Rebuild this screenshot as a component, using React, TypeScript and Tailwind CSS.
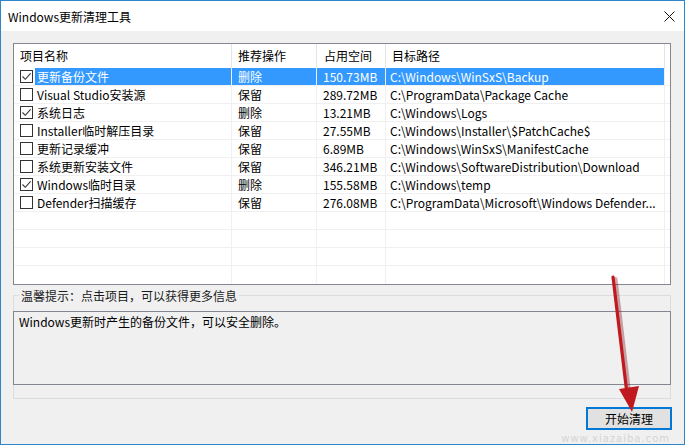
import React from 'react';

type Row = { c: boolean; name: string; op: string; size: string; path: string; sel?: boolean };

const rows: Row[] = [
  { c: true, name: '更新备份文件', op: '删除', size: '150.73MB', path: 'C:\\Windows\\WinSxS\\Backup', sel: true },
  { c: false, name: 'Visual Studio安装源', op: '保留', size: '289.72MB', path: 'C:\\ProgramData\\Package Cache' },
  { c: true, name: '系统日志', op: '删除', size: '13.21MB', path: 'C:\\Windows\\Logs' },
  { c: false, name: 'Installer临时解压目录', op: '保留', size: '27.55MB', path: 'C:\\Windows\\Installer\\$PatchCache$' },
  { c: false, name: '更新记录缓冲', op: '保留', size: '6.89MB', path: 'C:\\Windows\\WinSxS\\ManifestCache' },
  { c: false, name: '系统更新安装文件', op: '保留', size: '346.21MB', path: 'C:\\Windows\\SoftwareDistribution\\Download' },
  { c: true, name: 'Windows临时目录', op: '删除', size: '155.58MB', path: 'C:\\Windows\\temp' },
  { c: false, name: 'Defender扫描缓存', op: '保留', size: '276.08MB', path: 'C:\\ProgramData\\Microsoft\\Windows Defender...' },
];

function Check({ on }: { on: boolean }) {
  return (
    <div className="w-[13px] h-[13px] border border-[#333333] bg-white flex items-center justify-center shrink-0">
      {on && (
        <svg width="11" height="11" viewBox="0 0 11 11">
          <path d="M1.5 5.5 L4.3 8.3 L9.6 2.4" fill="none" stroke="#333" strokeWidth="1.1" />
        </svg>
      )}
    </div>
  );
}

export default function App() {
  return (
    <div className="relative w-[685px] h-[445px] border border-[#2e86c9] bg-[#f0f0f0] flex flex-col text-[12px] text-black font-['Noto_Sans_CJK_SC',sans-serif] overflow-hidden">
      {/* title bar */}
      <div className="h-[30px] bg-white flex items-center justify-between pl-[7px] pr-[9px] shrink-0">
        <span className="leading-[18px] text-[12px] mt-[1px]">Windows更新清理工具</span>
        <svg width="11" height="11" viewBox="0 0 11 11" className="mt-[1px]">
          <path d="M0.5 0.5 L10.5 10.5 M10.5 0.5 L0.5 10.5" stroke="#111" strokeWidth="1" />
        </svg>
      </div>

      {/* list view */}
      <div className="mt-[12px] ml-[12px] w-[658px] h-[242px] border border-[#828790] bg-white flex flex-col shrink-0">
        <div className="h-[24px] flex shrink-0">
          <div className="w-[218px] border-r border-[#e5e5e5] pl-[6px] flex items-center leading-[18px]">项目名称</div>
          <div className="w-[85px] border-r border-[#e5e5e5] pl-[6px] flex items-center leading-[18px]">推荐操作</div>
          <div className="w-[69px] border-r border-[#e5e5e5] pl-[7px] flex items-center leading-[18px]">占用空间</div>
          <div className="w-[279px] border-r border-[#e5e5e5] pl-[6px] flex items-center leading-[18px]">目标路径</div>
        </div>
        {rows.map((r, i) => {
          const selBg = r.sel ? 'bg-[#3399ff] text-white' : '';
          return (
            <div key={i} className="h-[18px] flex border-b border-[#f0f0f0] shrink-0">
              <div className="w-[218px] border-r border-[#f0f0f0] flex items-center">
                <div className="pl-[6px] pr-[2px] flex items-center">
                  <Check on={r.c} />
                </div>
                <div className={`flex-1 h-full pl-[2px] flex items-center leading-[17px] whitespace-nowrap ${selBg}`}>{r.name}</div>
              </div>
              <div className={`w-[85px] border-r border-[#f0f0f0] pl-[6px] flex items-center leading-[17px] ${selBg}`}>{r.op}</div>
              <div className={`w-[69px] border-r border-[#f0f0f0] pl-[6px] flex items-center leading-[17px] ${selBg}`}>{r.size}</div>
              <div className={`w-[279px] border-r border-[#f0f0f0] pl-[4px] flex items-center leading-[17px] whitespace-nowrap overflow-hidden ${selBg}`}>{r.path}</div>
            </div>
          );
        })}
        {[0, 1, 2, 3].map((i) => (
          <div key={'e' + i} className={`h-[18px] flex shrink-0 ${i < 3 ? 'border-b border-[#f0f0f0]' : ''}`}>
            <div className="w-[218px] border-r border-[#f0f0f0]" />
            <div className="w-[85px] border-r border-[#f0f0f0]" />
            <div className="w-[69px] border-r border-[#f0f0f0]" />
            <div className="w-[279px] border-r border-[#f0f0f0]" />
          </div>
        ))}
      </div>

      {/* group box with hint */}
      <div className="mt-[10px] ml-[12px] w-[658px] h-[104px] border border-[#dcdcdc] flex flex-col shrink-0">
        <div className="h-[15px] shrink-0">
          <span className="block w-fit -mt-[9px] ml-[5px] px-[2px] bg-[#f0f0f0] leading-[18px] text-[#1a1a1a]">温馨提示：点击项目，可以获得更多信息</span>
        </div>
        <div className="-mx-[1px] h-[74px] border border-[#828790] bg-[#f0f0f0] pl-[5px] pt-[1px] leading-[18px] shrink-0">
          Windows更新时产生的备份文件，可以安全删除。
        </div>
      </div>

      {/* button row */}
      <div className="mt-[8px] flex justify-end pr-[12px] shrink-0">
        <button className="relative z-10 w-[86px] h-[23px] border-2 border-[#0078d7] bg-[#e1e1e1] flex items-center justify-center leading-[18px] text-[12px]">
          开始清理
        </button>
      </div>

      {/* watermark url */}
      <div className="absolute right-[14px] bottom-[0px] pointer-events-none">
        <span className="block text-[10px] leading-[11px] text-[#d4d4d4] tracking-[1px] font-['DejaVu_Sans',sans-serif]">www.xiazaiba.com</span>
      </div>

      {/* red arrow annotation */}
      <svg className="absolute left-0 top-0 pointer-events-none z-20" width="685" height="445" viewBox="0 0 685 445">
        <path d="M613 277 L627 394" stroke="#7a0f12" strokeWidth="4" strokeLinecap="round" opacity="0.35" transform="translate(1.5 1)" />
        <path d="M612 276 L626 393" stroke="#c0191f" strokeWidth="3.2" strokeLinecap="round" />
        <path d="M618 388 L638 385 L631 411 Z" fill="#c0191f" />
      </svg>
    </div>
  );
}
